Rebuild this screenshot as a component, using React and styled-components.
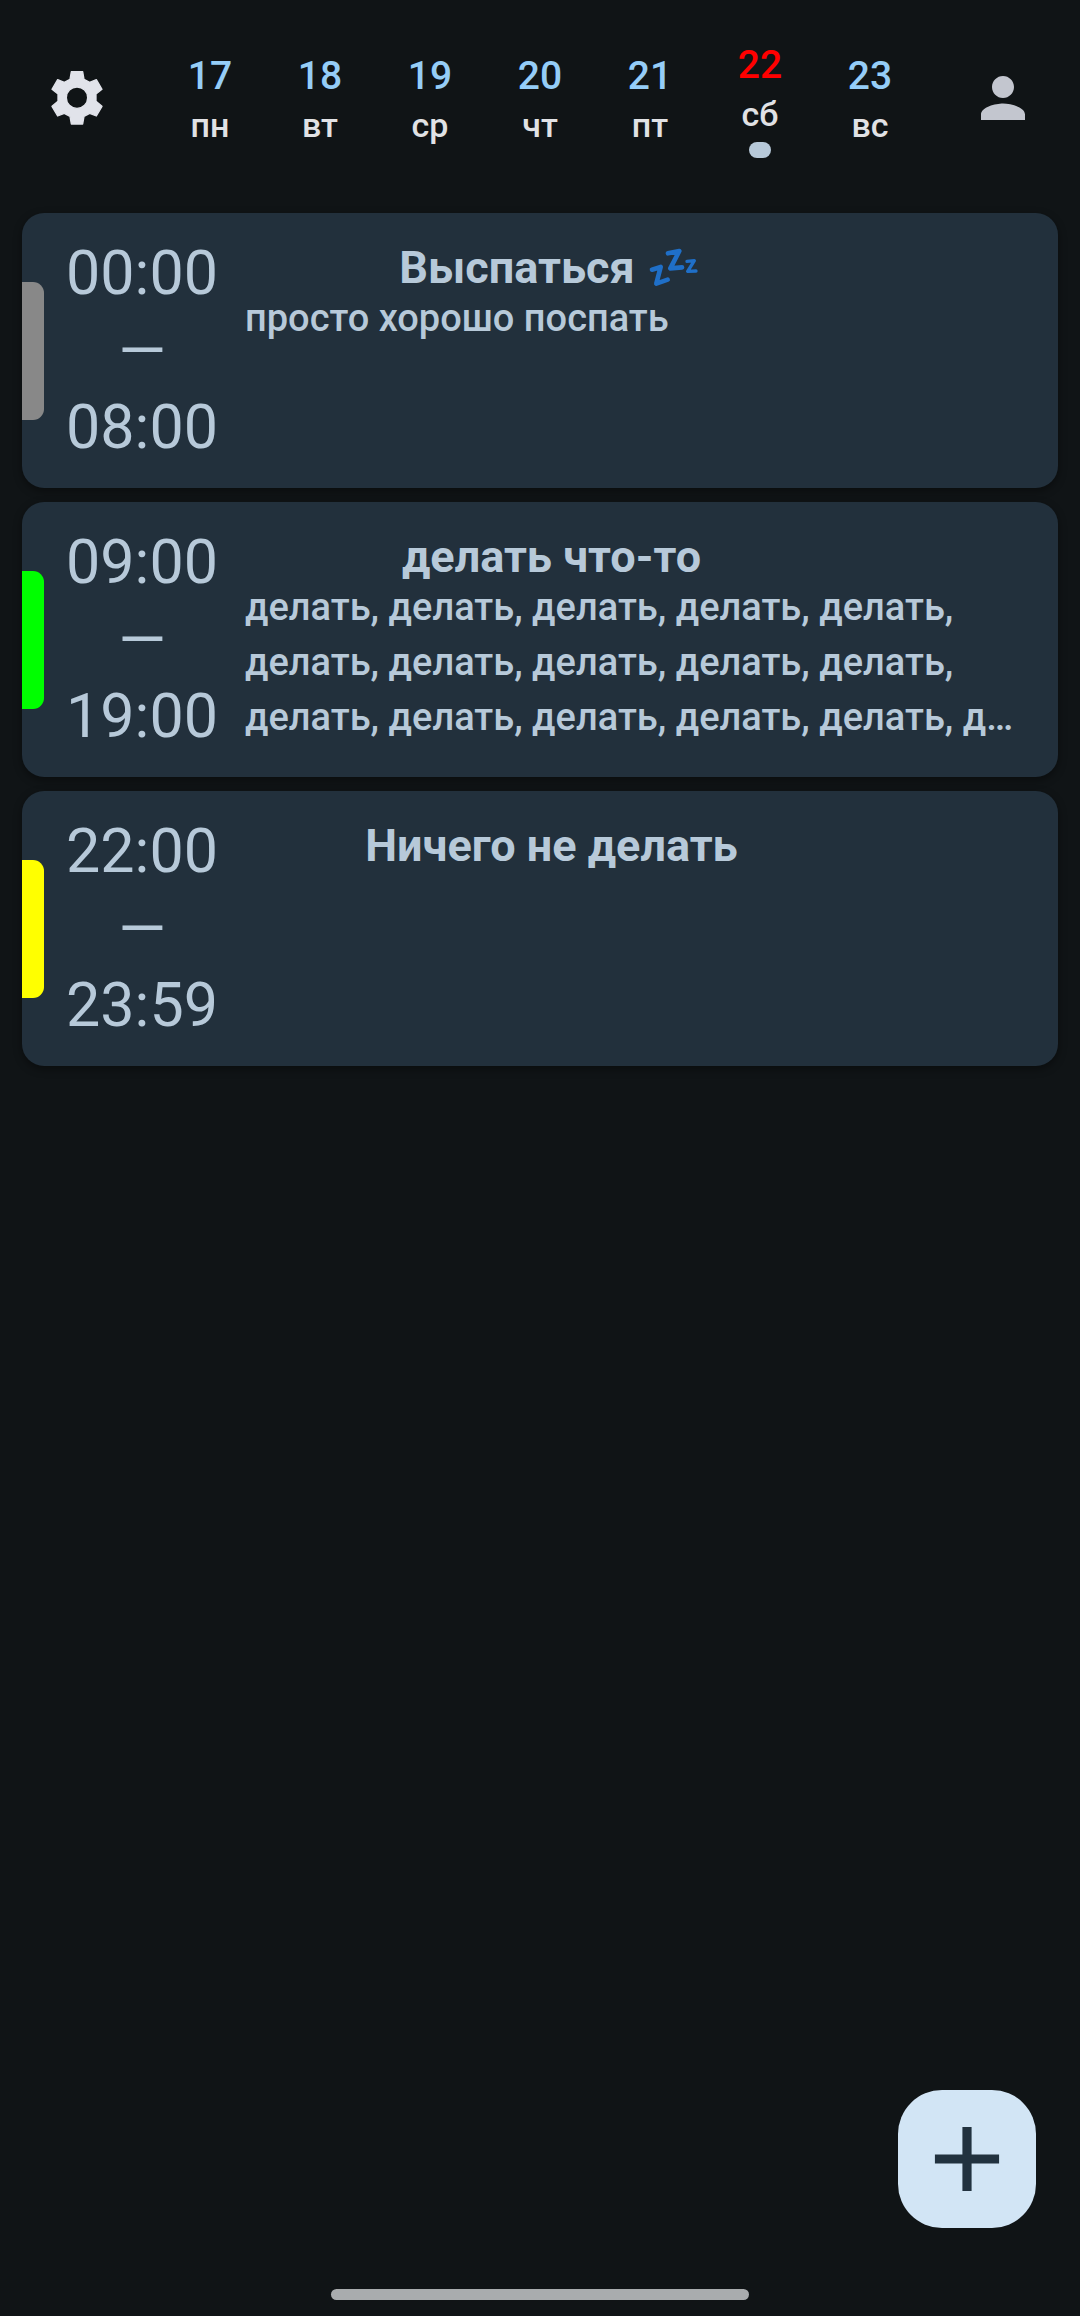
import React from "react";
import styled, { createGlobalStyle } from "styled-components";
import { MdPerson, MdAdd } from "react-icons/md";

const GlobalStyle = createGlobalStyle`
  *, *::before, *::after { box-sizing: border-box; }
  body {
    margin: 0;
    background: #101416;
    color: #b7c9d9;
    font-family: Roboto, "Noto Sans", sans-serif;
  }
  button { font: inherit; color: inherit; cursor: pointer; }
  h2, p { margin: 0; }
`;

const Screen = styled.div`
  display: flex;
  flex-direction: column;
  min-height: 100vh;
`;

const Header = styled.header`
  display: flex;
  align-items: center;
  justify-content: space-between;
  padding: 38px 44px 0;
`;

const IconButton = styled.button`
  display: flex;
  padding: 0;
  border: 0;
  background: none;
  color: ${(p) => p.$color};
  font-size: 66px;
`;

const Week = styled.nav`
  display: flex;
  align-items: center;
`;

const Day = styled.button`
  display: flex;
  flex-direction: column;
  align-items: center;
  width: 110px;
  padding: 0;
  border: 0;
  background: none;
  font-weight: 500;
`;

const DayNumber = styled.span`
  color: ${(p) => (p.$selected ? "#ff0000" : "#95cdf7")};
  font-size: 39px;
  line-height: 54px;
`;

const DayName = styled.span`
  color: #e1e2e5;
  font-size: 34px;
  line-height: 44px;
`;

const DayDot = styled.span`
  width: 22px;
  height: 16px;
  margin-top: 6px;
  border-radius: 8px;
  background: #b7c9d9;
`;

const TaskList = styled.main`
  display: flex;
  flex-direction: column;
  gap: 14px;
  padding: 55px 22px 0;
`;

const TaskCard = styled.article`
  display: flex;
  align-items: center;
  border-radius: 22px;
  background: #22303c;
  box-shadow: 0 3px 8px rgba(0, 0, 0, 0.4);
`;

const Marker = styled.span`
  flex: none;
  width: 22px;
  height: 138px;
  border-radius: 0 11px 11px 0;
  background: ${(p) => p.$color};
`;

const TaskBody = styled.div`
  flex: 1;
  display: grid;
  grid-template-columns: 201px 1fr 178px;
  grid-template-rows: auto 1fr;
  padding: 22px 22px 22px 0;
`;

const TimeRange = styled.div`
  grid-row: 1 / 3;
  display: flex;
  flex-direction: column;
  align-items: center;
  padding: 0 27px 0 22px;
  font-size: 61px;
  line-height: 77px;
`;

const TaskTitle = styled.h2`
  grid-column: 2;
  display: flex;
  justify-content: center;
  align-items: center;
  gap: 9px;
  padding: 10px 0 1px;
  font-size: 45px;
  font-weight: 700;
  line-height: 45px;
  white-space: nowrap;
`;

const TaskText = styled.p`
  grid-column: 2 / 4;
  font-size: 38px;
  font-weight: 500;
  line-height: 55px;
`;

const Footer = styled.footer`
  display: flex;
  flex-direction: column;
  align-items: center;
  gap: 61px;
  margin-top: auto;
  padding: 44px 44px 16px;
`;

const AddButton = styled.button`
  display: flex;
  align-items: center;
  justify-content: center;
  align-self: flex-end;
  width: 138px;
  height: 138px;
  padding: 0;
  border: 0;
  border-radius: 44px;
  background: #d2e5f5;
  color: #22323f;
  font-size: 110px;
`;

const HomeBar = styled.div`
  width: 418px;
  height: 11px;
  border-radius: 6px;
  background: #a9acae;
`;

const GearIcon = () => (
  <svg width="66" height="66" viewBox="0 0 198 198" aria-hidden="true">
    <path
      fill="currentColor"
      stroke="currentColor"
      strokeWidth="4"
      strokeLinejoin="round"
      fillRule="evenodd"
      d="M82 20H116L120 43L137 52L157 44L174 73L156 87V109L174 124L157 153L137 145L120 154L116 177H82L78 154L61 145L41 153L24 124L42 109V87L24 73L41 44L61 52L78 43ZM99 66A32 32 0 1 0 99 130A32 32 0 1 0 99 66Z"
    />
  </svg>
);

const SleepIcon = () => (
  <svg
    width="60"
    height="44"
    viewBox="0 8 180 132"
    role="img"
    aria-label="сон"
    fill="none"
    stroke="#1f6fc8"
    strokeLinecap="round"
    strokeLinejoin="round"
  >
    <path d="M24 79L50 71L37 121L71 109" strokeWidth="14" />
    <path d="M72 30L106 23L79 75L114 72" strokeWidth="14" />
    <path d="M129 54L151 52L131 84L156 83" strokeWidth="10" />
  </svg>
);

const days = [
  { number: 17, name: "пн" },
  { number: 18, name: "вт" },
  { number: 19, name: "ср" },
  { number: 20, name: "чт" },
  { number: 21, name: "пт" },
  { number: 22, name: "сб", selected: true },
  { number: 23, name: "вс" },
];

const tasks = [
  {
    from: "00:00",
    to: "08:00",
    color: "#888888",
    title: "Выспаться",
    icon: <SleepIcon />,
    text: "просто хорошо поспать",
  },
  {
    from: "09:00",
    to: "19:00",
    color: "#00ff00",
    title: "делать что-то",
    text: "делать, ".repeat(15) + "д…",
  },
  { from: "22:00", to: "23:59", color: "#ffff00", title: "Ничего не делать" },
];

export default function App() {
  return (
    <Screen>
      <GlobalStyle />
      <Header>
        <IconButton $color="#e1e3ea" aria-label="Настройки">
          <GearIcon />
        </IconButton>
        <Week aria-label="Неделя">
          {days.map((day) => (
            <Day key={day.number} aria-current={day.selected ? "date" : undefined}>
              <DayNumber $selected={day.selected}>{day.number}</DayNumber>
              <DayName>{day.name}</DayName>
              {day.selected && <DayDot />}
            </Day>
          ))}
        </Week>
        <IconButton $color="#c3c6cf" aria-label="Профиль">
          <MdPerson />
        </IconButton>
      </Header>
      <TaskList>
        {tasks.map((task) => (
          <TaskCard key={task.from}>
            <Marker $color={task.color} />
            <TaskBody>
              <TimeRange>
                <time>{task.from}</time>
                <span>—</span>
                <time>{task.to}</time>
              </TimeRange>
              <TaskTitle>
                {task.title}
                {task.icon}
              </TaskTitle>
              {task.text && <TaskText>{task.text}</TaskText>}
            </TaskBody>
          </TaskCard>
        ))}
      </TaskList>
      <Footer>
        <AddButton aria-label="Добавить">
          <MdAdd />
        </AddButton>
        <HomeBar />
      </Footer>
    </Screen>
  );
}
